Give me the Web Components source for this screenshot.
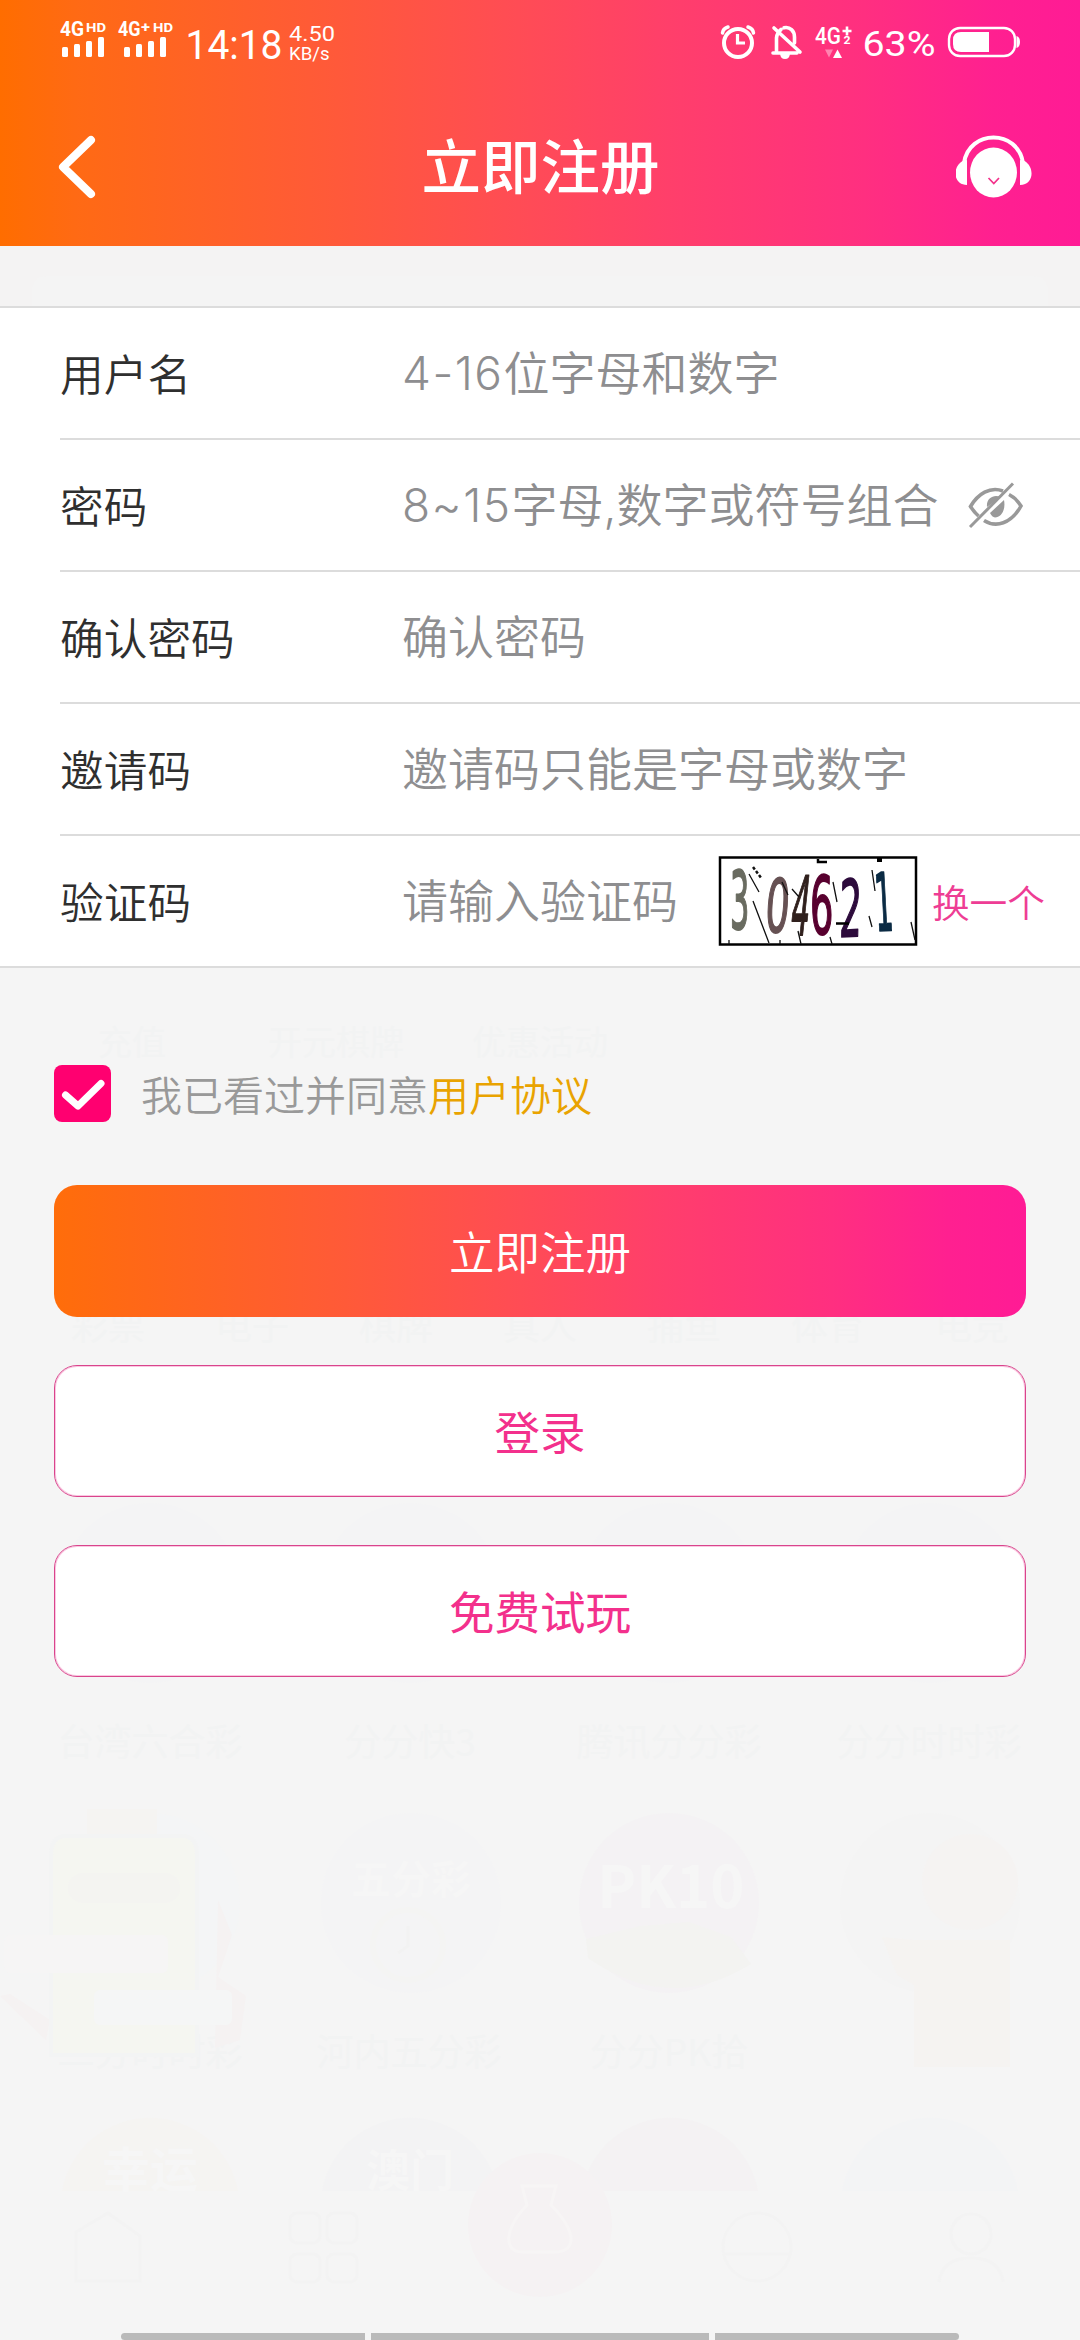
<!DOCTYPE html>
<html lang="zh-CN">
<head>
<meta charset="utf-8">
<title>立即注册</title>
<style>
html,body{margin:0;padding:0}
body{width:1080px;height:2340px;overflow:hidden;background:#f5f5f5;font-family:Inter,"Noto Sans CJK SC",sans-serif}
</style>
</head>
<body>
<register-page></register-page>
<script>
const define=(name,html)=>customElements.define(name,class extends HTMLElement{
  constructor(){super();this.attachShadow({mode:'open'}).innerHTML=html;}
});

define('faded-backdrop',`<style>
:host{display:block;position:absolute;inset:0;z-index:0}
svg{display:block}
text{font-family:"Noto Sans CJK SC",sans-serif;font-size:37px;fill:#f2f3f3;text-anchor:middle}
.b{fill:#f6f6f6;font-weight:700}
</style>
<svg width="1080" height="2340" viewBox="0 0 1080 2340">
<rect y="246" width="1080" height="60" fill="#f4f3f3"/>
<path d="M32 306V292Q32 276 48 276H1032Q1048 276 1048 292V306Z" fill="#f4f4f4"/>
<g><text x="132" y="1055" style="font-size:34px">充值</text><text x="336" y="1055" style="font-size:34px">开元棋牌</text><text x="540" y="1055" style="font-size:34px">优惠活动</text></g>
<g><text x="108" y="1340">彩票</text><text x="252" y="1340">电子</text><text x="396" y="1340">棋牌</text><text x="540" y="1340">真人</text><text x="684" y="1340">捕鱼</text><text x="828" y="1340">体育</text><text x="972" y="1340">电竞</text></g>
<g fill="#f4f4f5"><circle cx="150" cy="1593" r="90"/><circle cx="410" cy="1593" r="90"/><circle cx="668" cy="1593" r="90"/><circle cx="930" cy="1593" r="90"/></g>
<g><text x="150" y="1756">台湾六合彩</text><text x="410" y="1756">分分快3</text><text x="669" y="1756">腾讯分分彩</text><text x="929" y="1756">分分时时彩</text></g>
<circle cx="150" cy="1903" r="90" fill="#f4f5f6"/><circle cx="411" cy="1903" r="90" fill="#f4f4f5"/><circle cx="669" cy="1903" r="90" fill="#f4f2f4"/><circle cx="930" cy="1903" r="90" fill="#f4f4f4"/>
<path d="M586 1939L640 1926 689 1922 731 1937 751 1964Q669 2015 588 1958Z" fill="#f3f3f1"/>
<text class="b" x="671" y="1908" style="font-size:58px">PK10</text>
<text class="b" x="411" y="1894" style="font-size:40px">五分彩</text>
<circle cx="408" cy="1945" r="35" fill="none" stroke="#f4f4f3" stroke-width="6"/>
<path d="M408 1926V1946L398 1953" fill="none" stroke="#f2f2f2" stroke-width="3"/>
<g><text x="150" y="2066">二分时时彩</text><text x="409" y="2066">河内五分彩</text><text x="669" y="2066">分分PK拾</text></g>
<path d="M0 1996L46 2040 50 2020 10 1994ZM218 1900L232 1935 218 1977 246 1996 240 2040 215 2048Z" fill="#f5f2f2"/>
<rect x="87" y="1809" width="70" height="30" fill="#f5f4f2"/>
<path d="M51 2055V1855Q51 1836 66 1836H182Q197 1836 197 1855V2055Z" fill="#f5f6f1" stroke="#f3f4f4" stroke-width="4"/>
<rect x="68" y="1873" width="112" height="30" rx="15" fill="#f4f4f1"/>
<rect x="4" y="1935" width="164" height="38" rx="6" fill="#f6f5f5"/><rect x="94" y="1990" width="138" height="35" rx="6" fill="#f5f6f6"/>
<circle cx="970" cy="1882" r="48" fill="#f5f3f2"/><path d="M882 1937L914 1940H1010V2067H914V1985L897 1975Z" fill="#f5f3f1"/>
<path d="M62 2191A89.500 89.500 0 0 1 238 2191Z" fill="#f5f4f2"/><path d="M322 2191A89.500 89.500 0 0 1 498 2191Z" fill="#f3f3f4"/><path d="M582 2191A89.500 89.500 0 0 1 758 2191Z" fill="#f4f2f3"/><path d="M842 2191A89.500 89.500 0 0 1 1018 2191Z" fill="#f3f4f5"/>
<text class="b" x="150" y="2187" style="font-size:48px">幸运</text><text class="b" x="410" y="2187" style="font-size:44px">澳门</text>
<circle cx="540" cy="2225" r="72" fill="#f5f2f3"/><path d="M522 2186H556L551 2205C580 2235 574 2252 555 2252H523C502 2252 505 2228 527 2205Z" fill="none" stroke="#f7f5f5" stroke-width="3"/>
<g fill="none" stroke="#f3f3f3" stroke-width="3"><path d="M76 2232L108 2213 140 2236V2281H76Z"/><rect x="290" y="2213" width="30" height="30" rx="7"/><rect x="327" y="2213" width="30" height="30" rx="7"/><rect x="290" y="2254" width="30" height="28" rx="7"/><rect x="327" y="2254" width="30" height="28" rx="7"/><circle cx="757" cy="2247" r="34"/><path d="M724 2254H790"/><circle cx="971" cy="2234" r="20"/><path d="M939 2282Q942 2258 971 2258T1003 2282"/></g>
</svg>`);

define('status-bar',`<style>
:host{display:flex;height:80px;color:#fff;align-items:flex-start;padding:0 0 0 60px;box-sizing:border-box}
svg{display:block;flex:none}
svg text{fill:#fff;font-family:Roboto,sans-serif}
</style>
<svg width="300" height="80" viewBox="60 0 300 80">
<g font-weight="700"><text x="60" y="36" font-size="20" textLength="24" lengthAdjust="spacingAndGlyphs">4G</text><text x="86" y="31.500" font-size="13.500" textLength="20" lengthAdjust="spacingAndGlyphs">HD</text>
<text x="118" y="36" font-size="20" textLength="22.500" lengthAdjust="spacingAndGlyphs">4G</text><text x="141" y="32" font-size="15" textLength="9" lengthAdjust="spacingAndGlyphs">+</text><text x="153" y="31.500" font-size="13.500" textLength="20" lengthAdjust="spacingAndGlyphs">HD</text></g>
<g fill="#fff"><rect x="62" y="47" width="6" height="10" rx="1.500"/><rect x="74" y="44" width="6" height="13" rx="1.500"/><rect x="86" y="41" width="6" height="16" rx="1.500"/><rect x="98" y="37" width="6" height="20" rx="1.500"/><rect x="124" y="47" width="6" height="10" rx="1.500"/><rect x="136" y="44" width="6" height="13" rx="1.500"/><rect x="148" y="41" width="6" height="16" rx="1.500"/><rect x="160" y="37" width="6" height="20" rx="1.500"/></g>
<text x="185.500" y="59" font-size="41" textLength="97" lengthAdjust="spacingAndGlyphs">14:18</text>
<text x="289" y="41" font-size="21" textLength="46" lengthAdjust="spacingAndGlyphs">4.50</text>
<text x="289" y="60" font-size="19" textLength="40.500" lengthAdjust="spacingAndGlyphs">KB/s</text>
</svg>
<svg width="330" height="80" viewBox="700 0 330 80" style="margin-left:340px">
<g fill="none" stroke="#fff" stroke-linecap="round" stroke-linejoin="round"><circle cx="738" cy="43" r="14" stroke-width="4"/><path d="M737.500 34V43H745" stroke-width="3.200" stroke-linecap="butt" stroke-linejoin="miter"/><path d="M722.500 33Q723 28.500 728 27M753.500 33Q753 28.500 748 27" stroke-width="3.500"/>
<path d="M773 53H797M776.500 51V38C777 33 779 31 781 29.500M784 27.800C790 26.500 794.500 31 794.500 37V43M774 28L800 52" stroke-width="3.600"/></g><path d="M780 53.500H790Q789.500 59 785 59T780 53.500Z" fill="#fff"/>
<text x="815" y="44" font-size="24" font-weight="500" textLength="26" lengthAdjust="spacingAndGlyphs">4G</text><path d="M842.500 31H851.500M847 26.500V35.500" stroke="#fff" stroke-width="2.600"/><text x="843.500" y="44" font-size="10.500" font-weight="700" textLength="7" lengthAdjust="spacingAndGlyphs">2</text>
<path d="M825 49.500H833L829 57.500Z" fill="#fff" opacity=".4"/><path d="M833 58L837.500 49.500 842 58Z" fill="#fff"/>
<text x="862.500" y="56" font-size="35.500" textLength="73" lengthAdjust="spacingAndGlyphs">63%</text>
<rect x="949" y="28" width="66" height="28" rx="11" fill="none" stroke="#fff" stroke-width="2.400"/><path d="M989 32V52H961Q953 52 953 44V40Q953 32 961 32Z" fill="#fff"/><path d="M1016.500 36Q1020 37 1020 42T1016.500 48Z" fill="#fff"/>
</svg>`);

define('nav-header',`<style>
:host{display:block;height:246px;background:linear-gradient(90deg,#ff6d00 0%,#ff6a14 7%,#ff5a38 30%,#ff4c55 48%,#ff3e6c 63%,#ff2f80 80%,#ff2090 92%,#ff1b95 100%)}
nav{display:flex;justify-content:space-between;align-items:center;height:174px;padding:0 48px 0 58px}
h1{margin:0;font:450 59.500px/88px "Noto Sans CJK SC",sans-serif;color:#fff;padding:0 0 9px 29px}
svg{display:block}
</style><status-bar></status-bar><nav>
<svg width="38" height="64" viewBox="58 135 38 64"><path d="M91 140L63 167 91 194" fill="none" stroke="#fff" stroke-width="8" stroke-linecap="round" stroke-linejoin="round"/></svg>
<h1><slot></slot></h1>
<svg width="76" height="64" viewBox="957 135 76 64"><path d="M965 163C970 129 1019 129 1024 163" fill="none" stroke="#fff" stroke-width="4"/><path d="M968 160V185C954 185 953 167 963.500 161ZM1021 160V185C1035 185 1036 167 1025.500 161Z" fill="#fff"/><ellipse cx="994.500" cy="172.500" rx="23.500" ry="25" fill="#fff"/><path d="M989.500 178L994.800 183.500 1000 178" fill="none" stroke="#f3308a" stroke-width="1.700"/></svg>
</nav>`);

define('form-list',`<style>
:host{display:block;background:#fff;border-top:2px solid #dcdcdc;border-bottom:2px solid #dcdcdc;margin-top:60px}
</style><slot></slot>`);

define('form-row',`<style>
:host{display:flex;align-items:center;height:130px;margin-left:60px;border-bottom:2px solid #dcdcdc}
:host([last]){border-bottom:0}
.label{flex:none;width:342px;font:350 43.700px/64px "Noto Sans CJK SC",sans-serif;color:#2f2f2f;padding-bottom:2px}
.hint{flex:none;font-size:46px;line-height:66px;font-weight:350;color:#8e8e90;white-space:nowrap;padding-bottom:1px}
::slotted(.num){font-weight:300;letter-spacing:1.500px}
</style><div class="label"><slot name="label"></slot></div><div class="hint"><slot></slot></div><slot name="end"></slot>`);

define('eye-off',`<style>:host{display:block;margin-left:auto;margin-right:56px}svg{display:block}</style>
<svg width="56" height="48" viewBox="968 481 56 48"><g fill="none" stroke="#999"><path d="M1003 491C990 486 978 494 970.500 506.500Q974 512 978.500 516" stroke-width="3.600"/><path d="M1009 494.500Q1016 498 1021 506C1011 524 996 528 984 520.500" stroke-width="3.600"/><path d="M970 527L1013 483.500" stroke-width="3"/></g><path d="M987 507C986 498 994 494 1000.500 497ZM990 513L1004 500C1006 510 1001 517.500 995 517.500Q992 517 990 513Z" fill="#999"/></svg>`);

define('captcha-code',`<style>:host{display:block;margin-left:auto;margin-right:15px}svg{display:block;overflow:visible}
text{font-family:"DejaVu Sans",sans-serif;font-size:80px}</style>
<svg width="198" height="90" viewBox="0 0 198 90"><rect x="1" y="1.500" width="196" height="87" fill="#fff" stroke="#000" stroke-width="2.500"/>
<g stroke-width="2" stroke-linejoin="round"><text transform="translate(11 73) scale(.38 1)" fill="#696b60" stroke="#696b60">3</text>
<text transform="translate(45 76) skewX(-4) scale(.47 .92)" fill="#665153" stroke="#665153">0</text>
<text transform="translate(70 79) skewX(-6) scale(.36 1.020)" fill="#30201d" stroke="#30201d">4</text>
<text transform="translate(91 78) scale(.46 1)" fill="#58002f" stroke="#58002f">6</text>
<text transform="translate(120 81) rotate(-3) skewX(-4) scale(.44 .98)" fill="#2d0b3c" stroke="#2d0b3c">2</text>
<text transform="translate(157 75) rotate(-3) scale(.36 1)" fill="#0b2b44" stroke="#0b2b44">1</text></g>
<path d="M30 18L40 36M34 45L50 87M114 26L118 46M153 14L156 35M73 33L80 41M150 60L153 71M192 66L196 84M63 26L69 39M79 75L82 88M111 81L113 88M61 84V88M10 84V88" fill="none" stroke="#111" stroke-width="1.300"/><path d="M34 11L43 23" stroke="#111" stroke-width="2.500" stroke-dasharray="3 2"/><path d="M117 67.500H130M99 3V6H108" stroke="#000" stroke-width="2.500" fill="none"/><path d="M158 2H163V6H158Z"/></svg>`);

define('link-text',`<style>:host{display:block;font:350 37.700px/56px "Noto Sans CJK SC",sans-serif;color:#ee3d94;margin-right:35px}</style><slot></slot>`);

define('agree-line',`<style>
:host{display:flex;align-items:center;height:58px;margin:97px 0 0 54px;font:350 41px/60px "Noto Sans CJK SC",sans-serif;color:#999}
svg{display:block;margin-right:30px}.link{color:#e9a300}
.t{white-space:nowrap;padding-bottom:3px}
</style><svg width="57" height="58"><rect width="57" height="57" rx="8" fill="#ff0070"/><path d="M11.500 30L24 41 47 18.500" fill="none" stroke="#fff" stroke-width="7" stroke-linecap="round" stroke-linejoin="round"/></svg>
<div class="t"><slot></slot><span class="link"><slot name="link"></slot></span></div>`);

define('app-button',`<style>
:host{display:flex;align-items:center;justify-content:center;box-sizing:border-box;height:132px;border-radius:23px;border:1px solid #d9448c;box-shadow:inset 0 0 0 1px rgba(240,70,155,.3);background:#fff;color:#f3308c;font:400 45.500px/66px "Noto Sans CJK SC",sans-serif;padding-bottom:3px}
:host([primary]){border:0;box-shadow:none;color:#fff;font-weight:350;background:linear-gradient(90deg,#ff6d0a 0%,#ff5a38 30%,#ff4c55 48%,#ff3e6c 63%,#ff2f80 80%,#ff2090 92%,#ff1b95 100%)}
</style><slot></slot>`);

define('gesture-bar',`<style>
:host{display:flex;gap:6px;height:7px;padding:0 121px}
i{background:#bababa;flex:244}i:nth-of-type(2){flex:338}i:first-of-type{border-radius:4px 0 0 4px}i:last-of-type{border-radius:0 4px 4px 0}
</style><i></i><i></i><i></i>`);

define('register-page',`<style>
:host{display:block;position:relative;width:1080px;height:2340px;overflow:hidden}
main{position:relative;z-index:1;display:flex;flex-direction:column;height:2340px}
.actions{display:flex;flex-direction:column;gap:48px;padding:62px 54px 0}
gesture-bar{margin-top:auto}
</style><faded-backdrop></faded-backdrop>
<main>
<nav-header>立即注册</nav-header>
<form-list>
<form-row><span slot="label">用户名</span><span class="num">4-16</span>位字母和数字</form-row>
<form-row><span slot="label">密码</span><span class="num">8~15</span>字母,数字或符号组合<eye-off slot="end"></eye-off></form-row>
<form-row><span slot="label">确认密码</span>确认密码</form-row>
<form-row><span slot="label">邀请码</span>邀请码只能是字母或数字</form-row>
<form-row last><span slot="label">验证码</span>请输入验证码<captcha-code slot="end"></captcha-code><link-text slot="end">换一个</link-text></form-row>
</form-list>
<agree-line>我已看过并同意<span slot="link">用户协议</span></agree-line>
<div class="actions"><app-button primary>立即注册</app-button><app-button>登录</app-button><app-button>免费试玩</app-button></div>
<gesture-bar></gesture-bar>
</main>`);
</script>
</body>
</html>
